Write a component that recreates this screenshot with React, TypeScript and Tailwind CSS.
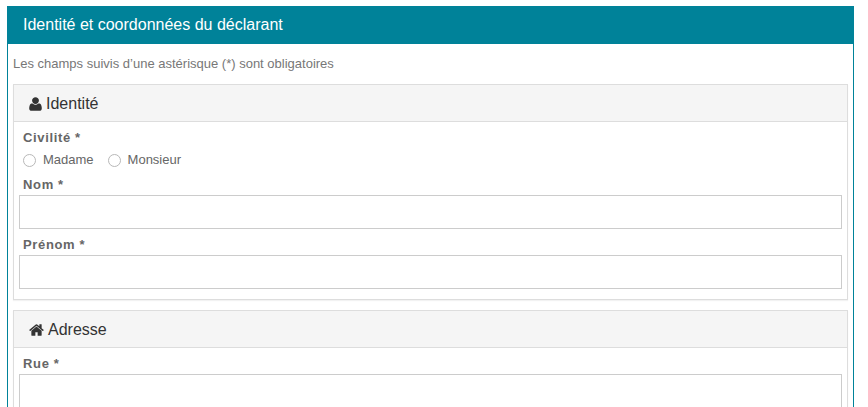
import { useId } from "react";
import type { ReactNode } from "react";

function UserIcon() {
  return (
    <svg viewBox="0 0 1408 1792" className="h-4 w-[13px]" fill="currentColor" aria-hidden="true">
      <path d="M1408 1405q0 120-73 189.5t-194 69.5h-874q-121 0-194-69.5t-73-189.5q0-53 3.5-103.5t14-109 26.5-108.5 43-97.5 62-81 85.5-53.5 111.5-20q9 0 42 21.5t74.5 48 108 48 133.5 21.5 133.5-21.5 108-48 74.5-48 42-21.5q61 0 111.5 20t85.5 53.5 62 81 43 97.5 26.5 108.5 14 109 3.5 103.5zM1088 512q0 159-112.5 271.5t-271.5 112.5-271.5-112.5-112.5-271.5 112.5-271.5 271.5-112.5 271.5 112.5 112.5 271.5z" />
    </svg>
  );
}

function HomeIcon() {
  return (
    <svg viewBox="64 0 1664 1792" className="h-4 w-[15px]" fill="currentColor" aria-hidden="true">
      <path d="M1472 992v480q0 26-19 45t-45 19h-384v-384h-256v384h-384q-26 0-45-19t-19-45v-480q0-1 .5-3t.5-3l575-474 575 474q1 2 1 6zm223-69l-62 74q-8 9-21 11h-3q-13 0-21-7l-692-577-692 577q-12 8-24 7-13-2-21-11l-62-74q-8-10-7-23.5t11-21.5l719-599q32-26 76-26t76 26l244 204v-195q0-14 9-23t23-9h192q14 0 23 9t9 23v408l219 182q10 8 11 21.5t-7 23.5z" />
    </svg>
  );
}

function Panel({ icon, title, children }: { icon: ReactNode; title: string; children: ReactNode }) {
  return (
    <section className="border border-[#dddddd] bg-white shadow-[0_1px_1px_rgba(0,0,0,0.05)]">
      <h2 className="flex h-[37px] items-center gap-1 border-b border-[#dddddd] bg-[#f5f5f5] px-[15px] pt-[2px] text-base text-[#333333]">
        {icon}
        {title}
      </h2>
      <div className="px-[5px] pt-[6px] pb-[10px]">{children}</div>
    </section>
  );
}

function TextField({ label }: { label: string }) {
  const id = useId();
  return (
    <div className="mb-[6px] last:mb-0">
      <label htmlFor={id} className="block px-1 leading-5 font-bold tracking-wider">
        {label} *
      </label>
      <input id={id} type="text" required className="block h-[34px] w-full border border-[#cccccc] bg-white px-3" />
    </div>
  );
}

function Radio({ label }: { label: string }) {
  return (
    <label className="flex items-center gap-[7px]">
      <input
        type="radio"
        name="civilite"
        className="size-[13px] appearance-none rounded-full border border-[#b8b8b8] bg-white checked:border-4 checked:border-[#008299]"
      />
      {label}
    </label>
  );
}

export default function App() {
  return (
    <main className="h-screen overflow-hidden pt-[6px] pr-[14px] pl-[7px] font-['Liberation_Sans',Arial,sans-serif] text-[13px] text-[#666666]">
      <form className="border border-[#008299]">
        <h1 className="flex h-[37px] items-center bg-[#008299] px-[15px] pb-[2px] text-base text-white">
          Identité et coordonnées du déclarant
        </h1>
        <div className="flex flex-col gap-[10px] px-[5px] pt-[10px] pb-4">
          <p className="leading-5 text-[#777777]">Les champs suivis d’une astérisque (*) sont obligatoires</p>
          <Panel icon={<UserIcon />} title="Identité">
            <fieldset className="mb-[3px]">
              <legend className="px-1 leading-5 font-bold tracking-wider">Civilité *</legend>
              <div className="flex gap-[14px] px-1 leading-6">
                <Radio label="Madame" />
                <Radio label="Monsieur" />
              </div>
            </fieldset>
            <TextField label="Nom" />
            <TextField label="Prénom" />
          </Panel>
          <Panel icon={<HomeIcon />} title="Adresse">
            <TextField label="Rue" />
          </Panel>
        </div>
      </form>
    </main>
  );
}
